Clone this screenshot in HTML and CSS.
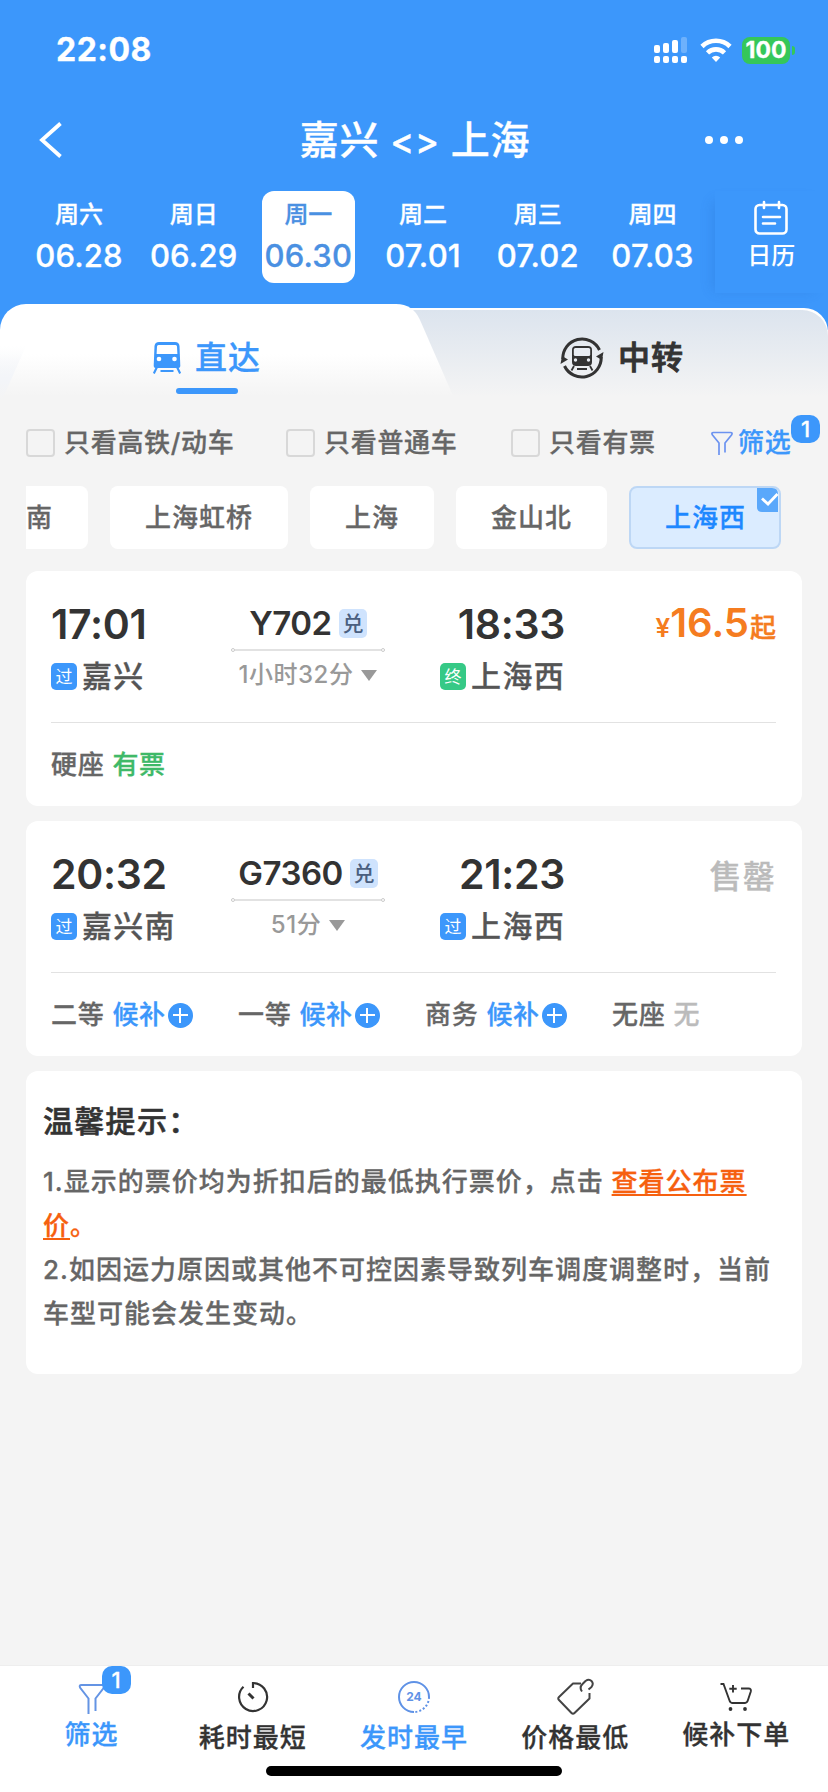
FILE: index.html
```html
<!DOCTYPE html>
<html lang="zh-CN">
<head>
	<meta charset="UTF-8">
	<meta name="viewport" content="width=device-width, initial-scale=1.0">
	<title>嘉兴 - 上海</title>
	<link rel="stylesheet" href="styles.css">
</head>
<body>
	<header class="header">
		<div class="status">
			<span class="status__time">22:08</span>
			<div class="status__icons">
				<svg width="34" height="28" viewBox="0 0 34 28" fill="#fff">
					<rect x="0" y="9" width="6" height="8" rx="2" />
					<rect x="9" y="7" width="6" height="10" rx="2" />
					<rect x="18" y="4" width="6" height="13" rx="2" />
					<rect x="27" y="1" width="6" height="16" rx="2" opacity=".25" />
					<rect x="0" y="20" width="6" height="7" rx="2" />
					<rect x="9" y="20" width="6" height="7" rx="2" />
					<rect x="18" y="20" width="6" height="7" rx="2" />
					<rect x="27" y="20" width="6" height="7" rx="2" />
				</svg>
				<svg width="32" height="26" viewBox="0 0 32 26" fill="none" stroke="#fff" stroke-width="4.6">
					<path d="M2 9.500a20 20 0 0 1 28 0" />
					<path d="M7.500 15.800a12.200 12.200 0 0 1 17 0" />
					<path d="M16 25l-4.200-4.600a6.200 6.200 0 0 1 8.400 0z" fill="#fff" stroke="none" />
				</svg>
				<span class="battery">100</span>
			</div>
		</div>
		<nav class="nav">
			<svg class="nav__back" width="24" height="36" viewBox="0 0 24 36" fill="none" stroke="#fff" stroke-width="3.8">
				<path d="M21.500 1.500L3 18l18.500 16.500" />
			</svg>
			<h1 class="nav__title">嘉兴 <span>&lt;&gt;</span> 上海</h1>
			<svg class="nav__more" width="40" height="10" viewBox="0 0 40 10" fill="#fff">
				<circle cx="5" cy="5" r="4" />
				<circle cx="20" cy="5" r="4" />
				<circle cx="35" cy="5" r="4" />
			</svg>
		</nav>
		<div class="dates">
			<div class="date"><span>周六</span><b>06.28</b></div>
			<div class="date"><span>周日</span><b>06.29</b></div>
			<div class="date date--active"><span>周一</span><b>06.30</b></div>
			<div class="date"><span>周二</span><b>07.01</b></div>
			<div class="date"><span>周三</span><b>07.02</b></div>
			<div class="date"><span>周四</span><b>07.03</b></div>
			<div class="calendar">
				<svg width="36" height="36" viewBox="0 0 36 36" fill="none" stroke="#fff" stroke-width="2.600" stroke-linecap="round">
					<rect x="2.500" y="5" width="31" height="28.500" rx="4" />
					<path d="M11 2v6M26 2v6M10 17h17M10 23.500h12" />
				</svg>
				<span>日历</span>
			</div>
		</div>
	</header>

	<div class="tabs">
		<svg class="tabs__bg" width="828" height="100" viewBox="0 0 828 100">
			<defs>
				<linearGradient id="tabGrey" x1="0" y1="0" x2="0" y2="1">
					<stop offset="0" stop-color="#dce4ee" />
					<stop offset="1" stop-color="#f4f4f4" />
				</linearGradient>
				<linearGradient id="tabWhite" x1="0" y1="0" x2="0" y2="1">
					<stop offset=".5" stop-color="#fff" />
					<stop offset=".92" stop-color="#f4f4f4" />
				</linearGradient>
				<linearGradient id="tabEdge" x1="0" y1="0" x2="0" y2="1">
					<stop offset="0" stop-color="#f3f5f9" stop-opacity="0" />
					<stop offset=".6" stop-color="#f3f5f9" />
					<stop offset="1" stop-color="#f4f4f4" />
				</linearGradient>
			</defs>
			<path d="M380 4h424a24 24 0 0 1 24 24v72H380z" fill="#fff" />
			<path d="M380 6h422a26 26 0 0 1 26 26v61H380z" fill="url(#tabGrey)" />
			<path d="M380 92h448v8H380z" fill="#f4f4f4" />
			<path d="M0 100V26A26 26 0 0 1 26 0h370q17 0 24 16l34 78v6z" fill="url(#tabWhite)" />
			<path d="M0 42h26L2 96H0z" fill="url(#tabEdge)" />
		</svg>
		<div class="tab tab--active">
			<svg width="28" height="32" viewBox="0 0 28 32">
				<path d="M6 0h16q4 0 4.500 4l.8 20q0 2-2 2H2.700q-2 0-2-2L1.500 4Q2 0 6 0z" fill="#3c97fb" />
				<path d="M5.500 3h17q1.500 0 1.500 1.500l.4 7.500H3.600L4 4.500Q4 3 5.500 3z" fill="#fff" />
				<circle cx="6" cy="17" r="2.300" fill="#fff" />
				<circle cx="21.500" cy="17" r="2.300" fill="#fff" />
				<path d="M4 25l-3.200 6.500M24 25l3.200 6.500M7.500 29h13" stroke="#3c97fb" stroke-width="2.200" fill="none" />
			</svg>
			<span>直达</span>
		</div>
		<div class="tab">
			<svg width="44" height="44" viewBox="0 0 44 44">
				<g fill="none" stroke="#333" stroke-width="3">
					<path d="M2.800 23A19.300 19.300 0 0 1 39.500 14" />
					<path d="M41.200 21A19.300 19.300 0 0 1 4.500 30" />
				</g>
				<path d="M.5 28l1.500-8 6 3.500zM43.500 16l-1.500 8-6-3.500z" fill="#333" />
				<rect x="12" y="10" width="20" height="20" rx="4" fill="#333" />
				<rect x="13.800" y="12" width="16.400" height="8" rx="1.500" fill="#e9edf3" />
				<circle cx="15.500" cy="24" r="1.700" fill="#e9edf3" />
				<circle cx="28.500" cy="24" r="1.700" fill="#e9edf3" />
				<path d="M14 30l-2.500 4.500M30 30l2.500 4.500M17 33h10" stroke="#333" stroke-width="1.800" />
			</svg>
			<span>中转</span>
		</div>
	</div>

	<div class="filters">
		<label class="check check--first"><i></i>只看高铁/动车</label>
		<label class="check check--second"><i></i>只看普通车</label>
		<label class="check check--third"><i></i>只看有票</label>
		<div class="filter">
			<svg width="22" height="25" viewBox="0 0 22 25" fill="none" stroke="#6c93f0" stroke-width="1.700">
				<path d="M8 24V12L1.500 4Q0 1.500 2.500 1.500h17Q22 1.500 20.500 4L14 12v9.500" />
			</svg>
			<span>筛选</span>
			<em class="count">1</em>
		</div>
	</div>

	<div class="stations">
		<div class="station station--cut">南</div>
		<div class="station">上海虹桥</div>
		<div class="station">上海</div>
		<div class="station">金山北</div>
		<div class="station station--active">上海西
			<svg class="station__mark" width="21" height="24" viewBox="0 0 21 24">
				<path d="M0 0h15q6 0 6 6v18H5q-5 0-5-5z" fill="#5aa8fb" />
				<path d="M5 10.500l6 5.500L20.500 6" fill="none" stroke="#fff" stroke-width="2.800" />
			</svg>
		</div>
	</div>

	<main class="list">
		<section class="card">
			<div class="trip">
				<div class="trip__from">
					<div class="time">17:01</div>
					<div class="place"><i class="tag">过</i>嘉兴</div>
				</div>
				<div class="trip__train">
					<div class="train">Y702<i class="swap">兑</i></div>
					<div class="line"></div>
					<div class="duration">1小时32分<i class="arrow"></i></div>
				</div>
				<div class="trip__to">
					<div class="time">18:33</div>
					<div class="place"><i class="tag tag--end">终</i>上海西</div>
				</div>
				<div class="price"><small>¥</small>16.5<span>起</span></div>
			</div>
			<div class="seats">
				<div class="seat">硬座 <b class="green">有票</b></div>
			</div>
		</section>

		<section class="card">
			<div class="trip">
				<div class="trip__from">
					<div class="time">20:32</div>
					<div class="place"><i class="tag">过</i>嘉兴南</div>
				</div>
				<div class="trip__train">
					<div class="train">G7360<i class="swap">兑</i></div>
					<div class="line"></div>
					<div class="duration">51分<i class="arrow"></i></div>
				</div>
				<div class="trip__to">
					<div class="time">21:23</div>
					<div class="place"><i class="tag">过</i>上海西</div>
				</div>
				<div class="soldout">售罄</div>
			</div>
			<div class="seats">
				<div class="seat">二等 <b class="blue">候补</b><i class="plus"></i></div>
				<div class="seat">一等 <b class="blue">候补</b><i class="plus"></i></div>
				<div class="seat">商务 <b class="blue">候补</b><i class="plus"></i></div>
				<div class="seat">无座 <b class="grey">无</b></div>
			</div>
		</section>

		<section class="card tips">
			<h2>温馨提示：</h2>
			<p>1.显示的票价均为折扣后的最低执行票价，点击 <a href="#">查看公布票<br>价</a><span>。</span></p>
			<p>2.如因运力原因或其他不可控因素导致列车调度调整时，当前<br>车型可能会发生变动。</p>
		</section>
	</main>

	<footer class="bottom">
		<div class="bottom__items">
			<div class="item item--filter item--active">
				<div class="item__icon">
					<svg width="28" height="32" viewBox="0 0 28 32" fill="none" stroke="#6494e4" stroke-width="2">
						<path d="M10.500 31V15.500L2 4.500Q1 2 3.500 2h21Q27 2 26 4.500L17.500 15.500V28" />
					</svg>
					<em class="count">1</em>
				</div>
				<span>筛选</span>
			</div>
			<div class="item">
				<div class="item__icon">
					<svg width="32" height="32" viewBox="0 0 32 32" fill="none" stroke="#333" stroke-width="2.200">
						<path d="M16 7V2a14 14 0 1 1-9.500 3.800" />
						<path d="M11.500 12.500l5 5" stroke-width="3" />
					</svg>
				</div>
				<span>耗时最短</span>
			</div>
			<div class="item item--active">
				<div class="item__icon">
					<svg width="34" height="34" viewBox="0 0 34 34" fill="none" stroke="#5f92e6" stroke-width="2">
						<path d="M17 32A15 15 0 1 1 32 17" />
						<path d="M32 17A15 15 0 0 1 17 32" stroke-dasharray="2 2" />
						<text x="17" y="21.200" class="clock24">24</text>
					</svg>
				</div>
				<span>发时最早</span>
			</div>
			<div class="item">
				<div class="item__icon">
					<svg width="38" height="38" viewBox="0 0 38 38" fill="none" stroke="#444" stroke-width="2" stroke-linejoin="round">
						<path d="M25 5.500h-8L3 19q-1.500 1.500 0 3l12.500 13q1.500 1.500 3 0L33.500 20.500V15" />
						<path d="M26 13.500q-3-4 .5-7.500l3-3q3.500-2.500 6 0t0 6l-3 2.500" />
					</svg>
				</div>
				<span>价格最低</span>
			</div>
			<div class="item item--cart">
				<div class="item__icon">
					<svg width="34" height="30" viewBox="0 0 34 30" fill="none" stroke="#333" stroke-width="1.900">
						<path d="M1.500 2h3l6 16.500q.8 2.500 3 2.500h12q2.500 0 3.300-2.500l3-9Q32.500 6.500 29.500 6.500H22" />
						<path d="M14 3v7.500M10.300 6.700h7.400" />
						<circle cx="11.500" cy="27" r="1.900" fill="#333" stroke="none" />
						<circle cx="26" cy="27" r="1.900" fill="#333" stroke="none" />
					</svg>
				</div>
				<span>候补下单</span>
			</div>
		</div>
		<div class="home"></div>
	</footer>
</body>
</html>
```

FILE: styles.css
```css
*,
*::before,
*::after {
	box-sizing: border-box;
	margin: 0;
	padding: 0;
}

i,
em {
	font-style: normal;
}

b {
	font-weight: inherit;
}

svg {
	display: block;
	flex-shrink: 0;
}

body {
	width: 828px;
	height: 1792px;
	display: flex;
	flex-direction: column;
	overflow: hidden;
	background-color: #f4f4f4;
	color: #666;
	font-family: Inter, "Noto Sans CJK SC", sans-serif;
	font-size: 26px;
	font-weight: 500;
	line-height: 1;
	white-space: nowrap;
	-webkit-text-stroke: 0.3px;
}

/* header */
.header {
	height: 330px;
	background-color: #3c97fb;
	color: #fff;
}

.status {
	display: flex;
	justify-content: space-between;
	height: 100px;
	padding: 34px 33px 0 56px;
}

.status__time {
	font-size: 32px;
	font-weight: 700;
	line-height: 32px;
	letter-spacing: 0.5px;
}

.status__icons {
	display: flex;
	align-items: center;
	gap: 12px;
	height: 32px;
}

.battery {
	position: relative;
	width: 48px;
	height: 27px;
	margin-right: 5px;
	margin-left: -2px;
	border-radius: 8px;
	background-color: #35c759;
	font-size: 23px;
	font-weight: 700;
	line-height: 27px;
	text-align: center;
}

.battery::after {
	content: "";
	position: absolute;
	top: 9px;
	right: -5px;
	width: 3px;
	height: 9px;
	border-radius: 0 3px 3px 0;
	background-color: #35c759;
}

.nav {
	display: flex;
	align-items: center;
	justify-content: space-between;
	height: 80px;
	padding: 0 84px 0 39px;
}

.nav__title {
	margin-left: 63px;
	padding-bottom: 2px;
	font-size: 39px;
	font-weight: 500;
	letter-spacing: 0.7px;
}

.nav__title span {
	font-size: 36px;
}

.dates {
	display: flex;
	padding: 11px 0 0 22px;
}

.date {
	width: 93px;
	height: 92px;
	margin-right: 21.700px;
	padding-top: 12px;
	border-radius: 12px;
	text-align: center;
}

.date:first-child {
	margin-left: 10.500px;
}

.date span,
.calendar span {
	display: block;
	font-size: 24px;
	line-height: 24px;
}

.date b {
	display: block;
	margin: 13px -10px 0;
	font-size: 31px;
	line-height: 32px;
	letter-spacing: 0.200px;
}

.date--active {
	background-color: #fff;
	color: #4a90e2;
}

.calendar {
	display: flex;
	flex-direction: column;
	align-items: center;
	flex: 1;
	height: 102px;
	margin-left: -6px;
	padding-top: 9px;
	box-shadow: -8px 4px 12px -6px rgba(30, 90, 180, 0.2);
}

.calendar span {
	margin-top: 8px;
	-webkit-text-stroke: 0;
}

/* tabs */
.tabs {
	position: relative;
	display: flex;
	height: 100px;
	margin-top: -26px;
}

.tabs__bg {
	position: absolute;
	top: 0;
	left: 0;
}

.tab {
	position: relative;
	display: flex;
	align-items: center;
	justify-content: center;
	flex: 1;
	gap: 14px;
	height: 108px;
	color: #333;
	font-size: 32px;
	letter-spacing: 1px;
	-webkit-text-stroke: 0.900px;
}

.tab:last-child {
	padding-left: 3px;
}

.tab--active {
	padding-left: 1px;
	color: #3c97fb;
	-webkit-text-stroke: 0.300px;
}

.tab--active::after {
	content: "";
	position: absolute;
	bottom: 18px;
	left: 176px;
	width: 62px;
	height: 6px;
	border-radius: 3px;
	background-color: #3c97fb;
}

/* filters */
.filters {
	display: flex;
	align-items: center;
	height: 50px;
	margin: 14px 0 0 26px;
	line-height: 28px;
	letter-spacing: 0.700px;
}

.check {
	display: flex;
	align-items: center;
	gap: 9px;
}

.check i {
	width: 29px;
	height: 28px;
	border: 2px solid #d8d8d8;
	border-radius: 4px;
}

.check--first {
	width: 260px;
}

.check--second {
	width: 225px;
}

.check--third {
	width: 200px;
}

.filter {
	position: relative;
	display: flex;
	align-items: center;
	gap: 5px;
	color: #3c97fb;
}

.count {
	position: absolute;
	top: -14px;
	left: 80px;
	width: 29px;
	height: 28px;
	border-radius: 10px;
	background-color: #3c97fb;
	color: #fff;
	font-size: 22px;
	line-height: 28px;
	letter-spacing: 0;
	text-align: center;
}

/* stations */
.stations {
	display: flex;
	gap: 22px;
	margin: 18px 0 22px 26px;
}

.station {
	position: relative;
	height: 63px;
	padding: 0 35px 0 35px;
	border-radius: 8px;
	background-color: #fff;
	line-height: 64px;
	letter-spacing: 1px;
}

.station--cut {
	width: 62px;
	padding: 0;
	border-radius: 0 8px 8px 0;
}

.station--active {
	border: 2px solid #bdd7f5;
	padding: 0 33px 0 34px;
	background-color: #dbecff;
	color: #1e88ff;
	line-height: 60px;
}

.station__mark {
	position: absolute;
	top: 0;
	right: 1px;
}

/* cards */
.list {
	display: flex;
	flex-direction: column;
	gap: 15px;
	flex: 1;
	padding: 0 26px;
}

.card {
	height: 235px;
	padding: 0 26px 0 25px;
	border-radius: 12px;
	background-color: #fff;
}

.trip {
	display: flex;
	height: 152px;
	padding-top: 33px;
	border-bottom: 1px solid #e2e2e2;
}

.trip__from {
	width: 180px;
}

.trip__train {
	width: 154px;
	display: flex;
	flex-direction: column;
	align-items: center;
}

.trip__to {
	display: flex;
	flex-direction: column;
	align-items: flex-end;
	width: 180px;
}

.time {
	height: 40px;
	color: #333;
	font-size: 41px;
	font-weight: 600;
	line-height: 40px;
	letter-spacing: -0.300px;
	-webkit-text-stroke: 0;
}

.place {
	display: flex;
	align-items: center;
	height: 32px;
	margin-top: 16px;
	color: #555;
	font-size: 30px;
	letter-spacing: 1.300px;
}

.tag {
	width: 26px;
	height: 27px;
	margin-right: 5px;
	border-radius: 5px;
	background-color: #3c97fb;
	color: #fff;
	font-size: 17px;
	font-weight: 400;
	line-height: 28px;
	letter-spacing: 0;
	text-align: center;
	-webkit-text-stroke: 0;
}

.tag--end {
	background-color: #36c986;
}

.train {
	display: flex;
	align-items: center;
	height: 38px;
	color: #333;
	font-size: 33px;
	font-weight: 600;
	letter-spacing: -0.500px;
	-webkit-text-stroke: 0;
}

.swap {
	width: 28px;
	height: 29px;
	margin-left: 7px;
	border-radius: 5px;
	background-color: #cfe3fd;
	color: #4a5f80;
	font-size: 21px;
	font-weight: 500;
	line-height: 29px;
	text-align: center;
}

/* thin line with a ring on both ends */
.line {
	position: relative;
	width: 154px;
	height: 2px;
	margin-top: 7px;
	background-color: #e2e2e2;
}

.line::before,
.line::after {
	content: "";
	position: absolute;
	top: -1px;
	left: 0;
	width: 4px;
	height: 4px;
	border: 1px solid #ccc;
	border-radius: 50%;
	background-color: #fff;
}

.line::after {
	right: 0;
	left: auto;
}

.duration {
	display: flex;
	align-items: center;
	height: 26px;
	margin-top: 11px;
	color: #999;
	font-size: 24px;
	letter-spacing: 0.500px;
	-webkit-text-stroke: 0;
}

.arrow {
	margin-left: 8px;
	border-top: 11px solid #999;
	border-right: 8px solid transparent;
	border-left: 8px solid transparent;
}

.price {
	flex: 1;
	color: #f57c20;
	font-size: 40px;
	font-weight: 600;
	line-height: 38px;
	text-align: right;
	-webkit-text-stroke: 0;
}

.price small {
	font-size: 26px;
}

.price span {
	margin-left: 1px;
	font-size: 26px;
	font-weight: 500;
	-webkit-text-stroke: 0.400px;
}

.soldout {
	flex: 1;
	margin-top: 7px;
	color: #bbb;
	font-size: 32px;
	line-height: 32px;
	text-align: right;
	letter-spacing: 1.200px;
}

.seats {
	display: flex;
	height: 84px;
}

.seat {
	display: flex;
	align-items: center;
	flex-shrink: 0;
	width: 187px;
	letter-spacing: 0.700px;
}

.seat b {
	margin-left: 8px;
}

.green {
	color: #3fb968;
}

.blue {
	color: #3c97fb;
}

.grey {
	color: #bbb;
}

.plus {
	width: 25px;
	height: 25px;
	margin-left: 2px;
	border-radius: 50%;
	background:
		linear-gradient(#fff, #fff) center / 15px 2px no-repeat,
		linear-gradient(#fff, #fff) center / 2px 15px no-repeat,
		#3c97fb;
}

.tips {
	height: 303px;
	padding: 34px 0 0 17px;
	letter-spacing: 1px;
}

.tips h2 {
	margin-bottom: 23px;
	color: #333;
	font-size: 30px;
	font-weight: 500;
	line-height: 32px;
	letter-spacing: 1.300px;
	-webkit-text-stroke: 0.600px;
}

.tips p {
	line-height: 44px;
}

.tips a,
.tips p span {
	color: #f6600f;
}

.tips a {
	text-decoration: underline;
	text-decoration-thickness: 2px;
	text-underline-offset: 3px;
}

/* bottom bar */
.bottom {
	height: 127px;
	border-top: 1px solid #eee;
	background-color: #fff;
}

.bottom__items {
	display: flex;
	padding: 0 11px;
	height: 100px;
}

.item {
	display: flex;
	flex-direction: column;
	align-items: center;
	width: 161.200px;
	padding-top: 12px;
	color: #333;
	letter-spacing: 1px;
}

.item--active {
	color: #3c97fb;
}

.item__icon {
	position: relative;
	display: flex;
	align-items: center;
	justify-content: center;
	height: 38px;
	margin-bottom: 9px;
}

.item--filter .item__icon,
.item--cart .item__icon {
	margin-bottom: 6px;
}

.item--filter .item__icon {
	padding-top: 3px;
}

.item .count {
	top: -12px;
	left: 24px;
}

.clock24 {
	fill: #5f92e6;
	stroke: none;
	font-size: 12px;
	font-weight: 700;
	letter-spacing: 0;
	text-anchor: middle;
	-webkit-text-stroke: 0;
}

.home {
	width: 296px;
	height: 10px;
	margin: 0 auto;
	border-radius: 5px;
	background-color: #000;
}
```
